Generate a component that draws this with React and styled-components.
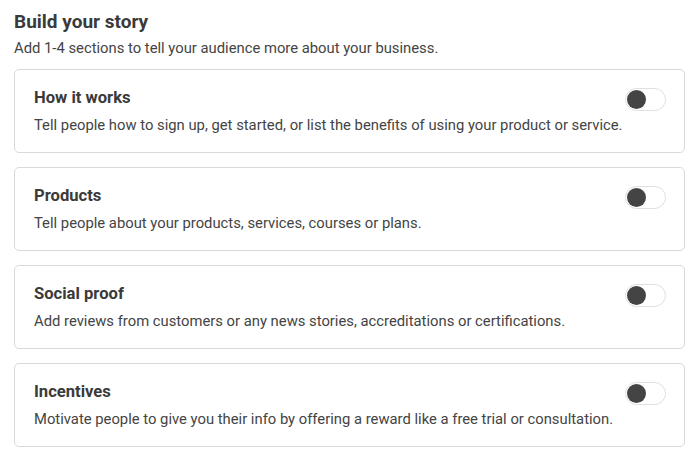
import React, { useState } from "react";
import styled, { createGlobalStyle } from "styled-components";

const GlobalStyle = createGlobalStyle`
  body {
    margin: 0;
    background: #fff;
    font-family: Roboto, "Liberation Sans", Arial, sans-serif;
    color: #444;
  }
`;

const Page = styled.div`
  padding: 10px 15px 0 14px;
`;

const Heading = styled.h2`
  margin: 0;
  font-size: 19px;
  font-weight: 700;
  line-height: 24px;
  color: #3a3a3a;
`;

const Intro = styled.p`
  margin: 4px 0 0;
  font-size: 14.8px;
  line-height: 20px;
  color: #444;
`;

const List = styled.div`
  display: flex;
  flex-direction: column;
  gap: 14px;
  margin-top: 11px;
`;

const Card = styled.div`
  display: flex;
  align-items: flex-start;
  justify-content: space-between;
  height: 84px;
  box-sizing: border-box;
  padding: 18px 18px 0 19px;
  border: 1px solid #d9d9d9;
  border-radius: 5px;
`;

const Text = styled.div`
  display: flex;
  flex-direction: column;
  gap: 7px;
`;

const Title = styled.div`
  font-size: 16.6px;
  font-weight: 700;
  line-height: 20px;
  color: #3a3a3a;
`;

const Desc = styled.div`
  font-size: 14.8px;
  line-height: 20px;
  color: #444;
`;

const Switch = styled.button`
  flex: none;
  position: relative;
  width: 41px;
  height: 23px;
  padding: 0;
  border: 1px solid #e0e0e0;
  border-radius: 12px;
  background: ${(p) => (p.$on ? "#444" : "#fff")};
  cursor: pointer;

  &::after {
    content: "";
    position: absolute;
    top: 1px;
    left: ${(p) => (p.$on ? "19px" : "1px")};
    width: 19px;
    height: 19px;
    border-radius: 50%;
    background: ${(p) => (p.$on ? "#fff" : "#444")};
  }
`;

const sections = [
  {
    title: "How it works",
    desc: "Tell people how to sign up, get started, or list the benefits of using your product or service.",
  },
  {
    title: "Products",
    desc: "Tell people about your products, services, courses or plans.",
  },
  {
    title: "Social proof",
    desc: "Add reviews from customers or any news stories, accreditations or certifications.",
  },
  {
    title: "Incentives",
    desc: "Motivate people to give you their info by offering a reward like a free trial or consultation.",
  },
];

const Section = ({ title, desc }) => {
  const [on, setOn] = useState(false);
  return (
    <Card>
      <Text>
        <Title>{title}</Title>
        <Desc>{desc}</Desc>
      </Text>
      <Switch $on={on} onClick={() => setOn(!on)} aria-label={title} />
    </Card>
  );
};

export default function App() {
  return (
    <>
      <GlobalStyle />
      <Page>
        <Heading>Build your story</Heading>
        <Intro>Add 1-4 sections to tell your audience more about your business.</Intro>
        <List>
          {sections.map((s) => (
            <Section key={s.title} {...s} />
          ))}
        </List>
      </Page>
    </>
  );
}
